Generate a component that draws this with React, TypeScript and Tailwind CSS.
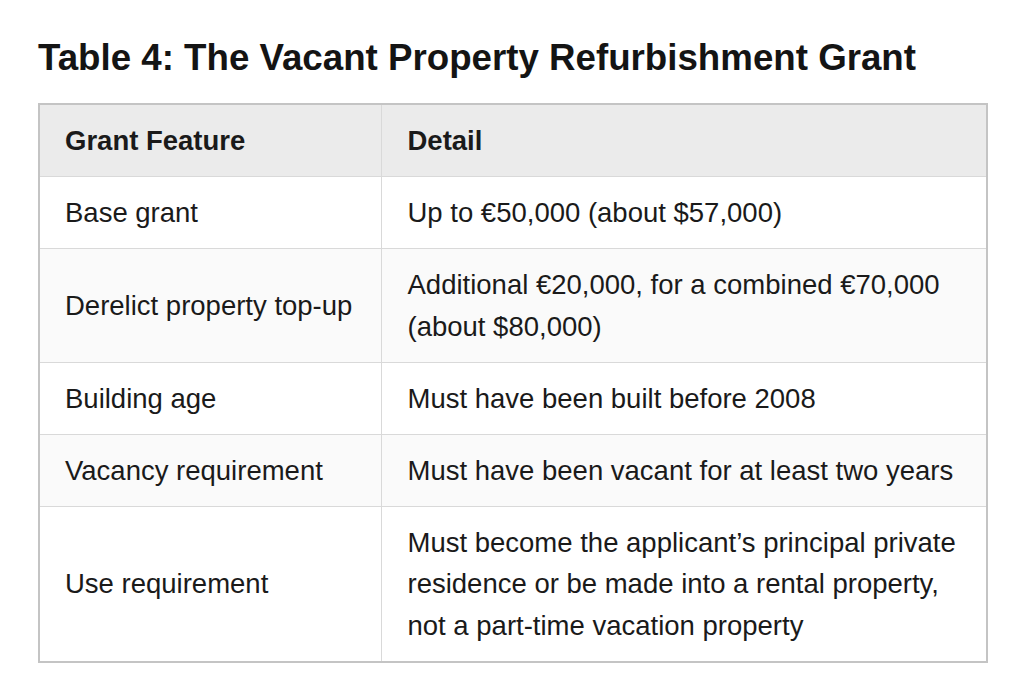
import React from 'react';

const rows = [
    { feature: 'Base grant', detail: 'Up to €50,000 (about $57,000)' },
    { feature: 'Derelict property top-up', detail: 'Additional €20,000, for a combined €70,000 (about $80,000)' },
    { feature: 'Building age', detail: 'Must have been built before 2008' },
    { feature: 'Vacancy requirement', detail: 'Must have been vacant for at least two years' },
    {
        feature: 'Use requirement',
        detail: 'Must become the applicant’s principal private residence or be made into a rental property, not a part-time vacation property',
    },
];

const App: React.FC = () => {
    return (
        <div className="min-h-[700px] bg-white px-[38px] pt-[36px] text-[#1a1a1a] font-['Liberation_Sans',Arial,sans-serif]">
            <h1 className="text-[36.7px] font-bold leading-[44px] text-[#141414]">
                Table 4: The Vacant Property Refurbishment Grant
            </h1>
            <table className="mt-[23px] w-[950px] border-collapse border-2 border-[#c4c4c4] text-[27.5px] leading-[41.2px] table-fixed">
                <colgroup>
                    <col className="w-[342px]" />
                    <col />
                </colgroup>
                <thead>
                    <tr className="bg-[#ebebeb]">
                        <th className="border border-[#d9d9d9] pl-[25px] pr-[26px] py-[15px] text-left font-bold">Grant Feature</th>
                        <th className="border border-[#d9d9d9] px-[26px] py-[15px] text-left font-bold">Detail</th>
                    </tr>
                </thead>
                <tbody>
                    {rows.map((row, i) => (
                        <tr key={row.feature} className={i % 2 === 1 ? 'bg-[#fafafa]' : 'bg-white'}>
                            <td className="border border-[#d9d9d9] pl-[25px] pr-[26px] py-[15px] align-middle">{row.feature}</td>
                            <td className="border border-[#d9d9d9] px-[26px] py-[15px] align-middle">{row.detail}</td>
                        </tr>
                    ))}
                </tbody>
            </table>
        </div>
    );
};

export default App;
